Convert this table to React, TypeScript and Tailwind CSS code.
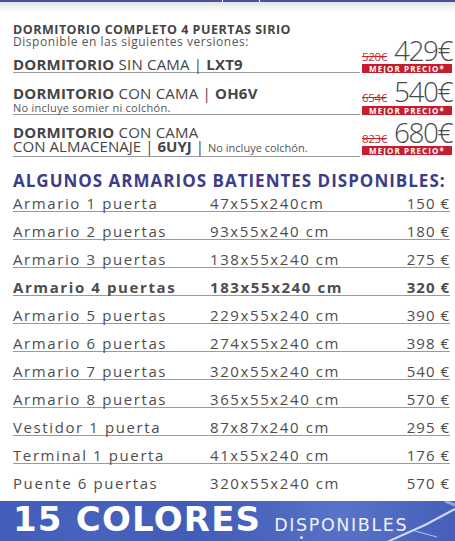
const ROWS = [
  { name: 'Armario 1 puerta', size: '47x55x240cm', price: '150 €' },
  { name: 'Armario 2 puertas', size: '93x55x240 cm', price: '180 €' },
  { name: 'Armario 3 puertas', size: '138x55x240 cm', price: '275 €' },
  { name: 'Armario 4 puertas', size: '183x55x240 cm', price: '320 €', bold: true },
  { name: 'Armario 5 puertas', size: '229x55x240 cm', price: '390 €' },
  { name: 'Armario 6 puertas', size: '274x55x240 cm', price: '398 €' },
  { name: 'Armario 7 puertas', size: '320x55x240 cm', price: '540 €' },
  { name: 'Armario 8 puertas', size: '365x55x240 cm', price: '570 €' },
  { name: 'Vestidor 1 puerta', size: '87x87x240 cm', price: '295 €' },
  { name: 'Terminal 1 puerta', size: '41x55x240 cm', price: '176 €' },
  { name: 'Puente 6 puertas', size: '320x55x240 cm', price: '570 €' },
];

function PriceTag({ old, price, className = '' }: { old: string; price: string; className?: string }) {
  return (
    <div className={'flex w-[90px] shrink-0 flex-col ' + className}>
      <div className="flex items-baseline justify-between">
        <span className="text-[11.5px] leading-none tracking-[-0.3px] text-[#b0303a] line-through decoration-[#d01c2c]">
          {old}
        </span>
        <span className="text-[28px] font-light leading-[24px] tracking-[-1.5px] text-[#4a4a4a]">{price}</span>
      </div>
      <div className="mt-[2px] flex h-[9px] w-[90px] items-center justify-center bg-[#c51d2d] text-[8px] font-bold leading-[9px] tracking-[1.1px] text-white">
        MEJOR PRECIO*
      </div>
    </div>
  );
}

export default function App() {
  return (
    <div className="relative h-[541px] w-[455px] overflow-hidden bg-white font-['Open_Sans',sans-serif] text-[#454545]">
      {/* top strip */}
      <div className="flex h-[2px]">
        <div className="w-[222px] bg-[#4b4f9f]" />
        <div className="w-[1px] bg-white" />
        <div className="w-[36px] bg-[#4b4f9f]" />
        <div className="w-[1px] bg-white" />
        <div className="flex-1 bg-[#4b4f9f]" />
      </div>
      <div className="h-[10px] bg-gradient-to-b from-[#e4e4e6] to-white" />

      {/* dormitorio versions */}
      <div className="pl-[13px] pr-[3px] pt-[11px]">
        <div className="flex items-end gap-[2px]">
          <div className="min-w-0 flex-1">
            <div className="text-[12.5px] font-bold leading-[13px] tracking-[0.5px] whitespace-nowrap">DORMITORIO COMPLETO 4 PUERTAS SIRIO</div>
            <div className="text-[12px] leading-[12px] tracking-[0.55px] text-[#555] whitespace-nowrap">Disponible en las siguientes versiones:</div>
            <div className="mt-[8px] border-b border-[#9a9a9a] text-[15px] leading-[16px] tracking-[0.2px] whitespace-nowrap">
              <span className="font-bold">DORMITORIO</span> SIN CAMA | <span className="font-bold">LXT9</span>
            </div>
          </div>
          <PriceTag old="520€" price="429€" />
        </div>

        <div className="mt-[6px] flex items-end gap-[2px]">
          <div className="min-w-0 flex-1 border-b border-[#9a9a9a]">
            <div className="text-[15px] leading-[16px] tracking-[0.2px] whitespace-nowrap">
              <span className="font-bold">DORMITORIO</span> CON CAMA | <span className="font-bold">OH6V</span>
            </div>
            <div className="text-[11px] leading-[13px] tracking-[0.25px] text-[#555] whitespace-nowrap">No incluye somier ni colchón.</div>
          </div>
          <PriceTag old="654€" price="540€" />
        </div>

        <div className="mt-[5px] flex items-end gap-[2px]">
          <div className="min-w-0 flex-1 border-b border-[#9a9a9a] pb-[1px]">
            <div className="text-[15px] leading-[14px] tracking-[0.2px] whitespace-nowrap">
              <span className="font-bold">DORMITORIO</span> CON CAMA
            </div>
            <div className="text-[15px] leading-[15px] tracking-[0.05px] whitespace-nowrap">
              CON ALMACENAJE | <span className="font-bold">6UYJ</span> |{' '}
              <span className="text-[11px] tracking-[0px] text-[#555]">No incluye colchón.</span>
            </div>
          </div>
          <PriceTag old="823€" price="680€" className="mb-[2px]" />
        </div>
      </div>

      {/* armarios */}
      <div className="pl-[13px] pr-[5px]">
        <div className="mt-[14px] text-[17px] font-bold leading-[20px] tracking-[1px] text-[#3c3c8c] whitespace-nowrap">
          ALGUNOS ARMARIOS BATIENTES DISPONIBLES:
        </div>
        <div className="mt-[4px] flex flex-col gap-[11px]">
          {ROWS.map((row, i) => (
            <div
              key={row.name}
              className={
                'flex text-[15px] leading-[16px] tracking-[1.6px] text-[#4d4d4d] ' +
                (i < ROWS.length - 1 ? 'border-b border-[#9a9a9a] ' : 'pb-[1px] ') +
                (row.bold ? 'font-bold' : '')
              }
            >
              <span className="w-[197px] whitespace-nowrap">{row.name}</span>
              <span className="flex-1 whitespace-nowrap">{row.size}</span>
              <span className="whitespace-nowrap tracking-[1px]">{row.price}</span>
            </div>
          ))}
        </div>
      </div>

      {/* colores banner */}
      <div className="relative mt-[9px] h-[41px] overflow-hidden bg-[#3d57b5] bg-[radial-gradient(circle_at_75%_30%,#5a74c8_0%,transparent_45%),radial-gradient(circle_at_20%_80%,#4763bd_0%,transparent_50%)]">
        <svg className="absolute right-0 top-0" width="80" height="41" viewBox="0 0 80 41">
          <path d="M12 41 L50 24 L80 8" stroke="#e8eef9" strokeWidth="2" fill="none" opacity="0.85" />
          <path d="M40 30 L62 36" stroke="#dfe7f7" strokeWidth="1.2" fill="none" opacity="0.7" />
          <path d="M70 0 L80 4" stroke="#c9d5f0" strokeWidth="3" fill="none" opacity="0.6" />
        </svg>
        <div className="absolute left-[300px] top-[35px] h-[3px] w-[3px] rounded-full bg-white/80" />
        <div className="relative flex items-baseline pl-[13px] font-['DejaVu_Sans',sans-serif]">
          <span className="text-[34px] font-bold leading-[36px] tracking-[1.2px] text-white">15 COLORES</span>
          <span className="ml-[13px] text-[17.5px] leading-[18px] tracking-[1.6px] text-[#eef1fb]">DISPONIBLES</span>
        </div>
      </div>
    </div>
  );
}
